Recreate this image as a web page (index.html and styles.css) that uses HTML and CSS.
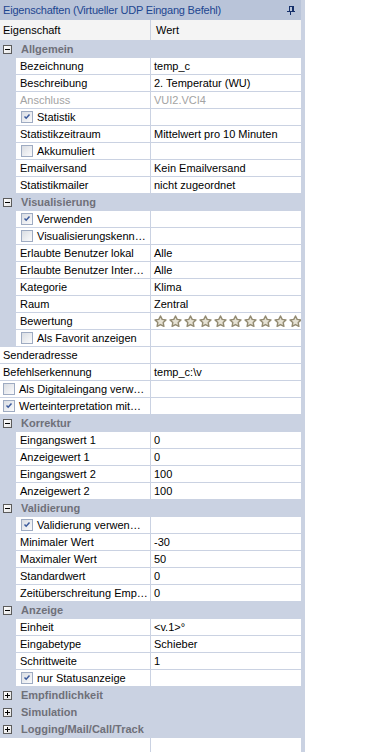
FILE: index.html
```html
<!DOCTYPE html>
<html lang="de">
<head>
    <meta charset="UTF-8">
    <meta name="viewport" content="width=device-width, initial-scale=1.0">
    <title>Eigenschaften</title>
    <link rel="stylesheet" href="styles.css">
</head>
<body>
    <svg width="0" height="0" class="defs">
        <symbol id="star" viewBox="-0.8 -0.8 13.6 13.2">
            <polygon points="6,0 7.76,3.57 11.71,4.15 8.85,6.93 9.53,10.85 6,9 2.47,10.85 3.15,6.93 0.29,4.15 4.24,3.57" fill="#e6e2d4" stroke="#938b72" stroke-width="1.5" stroke-linejoin="round"/>
        </symbol>
        <symbol id="tick" viewBox="0 0 12 12">
            <path d="M3 5.5l2 2 4-4.5" fill="none" stroke="#3b5a9c" stroke-width="1.8"/>
        </symbol>
    </svg>

    <div class="panel">
        <div class="titlebar">
            <span>Eigenschaften (Virtueller UDP Eingang Befehl)</span>
            <svg class="pin" width="8" height="9" viewBox="0 0 8 9"><path d="M2 0h5v1H2zM2 1h1v4H2zM5 1h2v4H5zM0 5h8v1H0zM3 6h1v3H3z" fill="#15306b"/></svg>
        </div>

        <div class="head">
            <div class="name">Eigenschaft</div>
            <div class="val">Wert</div>
        </div>

        <div class="cat"><span class="exp"></span>Allgemein</div>
        <div class="row"><div class="name">Bezeichnung</div><div class="val">temp_c</div></div>
        <div class="row"><div class="name">Beschreibung</div><div class="val">2. Temperatur (WU)</div></div>
        <div class="row off"><div class="name">Anschluss</div><div class="val">VUI2.VCI4</div></div>
        <div class="row"><div class="name box"><span class="chk"><svg><use href="#tick"/></svg></span>Statistik</div><div class="val"></div></div>
        <div class="row"><div class="name">Statistikzeitraum</div><div class="val">Mittelwert pro 10 Minuten</div></div>
        <div class="row"><div class="name box"><span class="chk"></span>Akkumuliert</div><div class="val"></div></div>
        <div class="row"><div class="name">Emailversand</div><div class="val">Kein Emailversand</div></div>
        <div class="row"><div class="name">Statistikmailer</div><div class="val">nicht zugeordnet</div></div>

        <div class="cat"><span class="exp"></span>Visualisierung</div>
        <div class="row"><div class="name box"><span class="chk"><svg><use href="#tick"/></svg></span>Verwenden</div><div class="val"></div></div>
        <div class="row"><div class="name box"><span class="chk"></span>Visualisierungskenn…</div><div class="val"></div></div>
        <div class="row"><div class="name">Erlaubte Benutzer lokal</div><div class="val">Alle</div></div>
        <div class="row"><div class="name">Erlaubte Benutzer Inter…</div><div class="val">Alle</div></div>
        <div class="row"><div class="name">Kategorie</div><div class="val">Klima</div></div>
        <div class="row"><div class="name">Raum</div><div class="val">Zentral</div></div>
        <div class="row">
            <div class="name">Bewertung</div>
            <div class="val stars">
                <svg><use href="#star"/></svg><svg><use href="#star"/></svg><svg><use href="#star"/></svg><svg><use href="#star"/></svg><svg><use href="#star"/></svg>
                <svg><use href="#star"/></svg><svg><use href="#star"/></svg><svg><use href="#star"/></svg><svg><use href="#star"/></svg><svg><use href="#star"/></svg>
            </div>
        </div>
        <div class="row"><div class="name box"><span class="chk"></span>Als Favorit anzeigen</div><div class="val"></div></div>

        <div class="row top"><div class="name">Senderadresse</div><div class="val"></div></div>
        <div class="row top"><div class="name">Befehlserkennung</div><div class="val">temp_c:\v</div></div>
        <div class="row top"><div class="name box"><span class="chk"></span>Als Digitaleingang verw…</div><div class="val"></div></div>
        <div class="row top"><div class="name box"><span class="chk"><svg><use href="#tick"/></svg></span>Werteinterpretation mit…</div><div class="val"></div></div>

        <div class="cat"><span class="exp"></span>Korrektur</div>
        <div class="row"><div class="name">Eingangswert 1</div><div class="val">0</div></div>
        <div class="row"><div class="name">Anzeigewert 1</div><div class="val">0</div></div>
        <div class="row"><div class="name">Eingangswert 2</div><div class="val">100</div></div>
        <div class="row"><div class="name">Anzeigewert 2</div><div class="val">100</div></div>

        <div class="cat"><span class="exp"></span>Validierung</div>
        <div class="row"><div class="name box"><span class="chk"><svg><use href="#tick"/></svg></span>Validierung verwen…</div><div class="val"></div></div>
        <div class="row"><div class="name">Minimaler Wert</div><div class="val">-30</div></div>
        <div class="row"><div class="name">Maximaler Wert</div><div class="val">50</div></div>
        <div class="row"><div class="name">Standardwert</div><div class="val">0</div></div>
        <div class="row"><div class="name">Zeitüberschreitung Emp…</div><div class="val">0</div></div>

        <div class="cat"><span class="exp"></span>Anzeige</div>
        <div class="row"><div class="name">Einheit</div><div class="val">&lt;v.1&gt;°</div></div>
        <div class="row"><div class="name">Eingabetype</div><div class="val">Schieber</div></div>
        <div class="row"><div class="name">Schrittweite</div><div class="val">1</div></div>
        <div class="row"><div class="name box"><span class="chk"><svg><use href="#tick"/></svg></span>nur Statusanzeige</div><div class="val"></div></div>

        <div class="cat"><span class="exp plus"></span>Empfindlichkeit</div>
        <div class="cat"><span class="exp plus"></span>Simulation</div>
        <div class="cat"><span class="exp plus"></span>Logging/Mail/Call/Track</div>

        <div class="blank"><div class="name"></div><div class="val"></div></div>
    </div>
</body>
</html>
```

FILE: styles.css
```css
* { box-sizing: border-box; }
body { margin: 0; background: #fff; font: 11px "Liberation Sans", Arial, sans-serif; color: #000; }
.defs { position: absolute; }

.panel { width: 305px; border-right: 4px solid #cad2e2; }

.titlebar { height: 20px; display: flex; align-items: center; justify-content: space-between; padding: 0 6px 0 3px; background: #b9c4d9; color: #1d4690; letter-spacing: -0.2px; }
.pin { display: block; }

.head { display: flex; height: 21px; line-height: 20px; border-bottom: 1px solid #cad2e2; background: #f4f4f4; }
.head .name { width: 151px; padding-left: 3px; border-right: 1px solid #cad2e2; }
.head .val { flex: 1; padding-left: 5px; }

.row { display: flex; height: 17px; line-height: 17px; padding-left: 16px; border-bottom: 1px solid #cad2e2; background: #cad2e2; }
.row .name { width: 135px; padding-left: 4px; border-right: 1px solid #cad2e2; background: #fff; white-space: nowrap; overflow: hidden; }
.row .val { flex: 1; padding-left: 3px; background: #fff; white-space: nowrap; overflow: hidden; }
.row.top { padding-left: 0; }
.row.top .name { width: 151px; padding-left: 3px; }
.row.off { color: #a3a3a3; }

.name.box { display: flex; align-items: center; padding-left: 5px; }
.row.top .name.box { padding-left: 3px; }
.chk { width: 12px; height: 12px; margin-right: 4px; flex: none; border: 1px solid #9eabc2; background: linear-gradient(135deg, #d9dde3, #fbfbfc); }
.chk svg { display: block; width: 10px; height: 10px; }

.stars { display: flex; align-items: center; gap: 2px; padding-left: 7px; }
.stars svg { width: 13px; height: 13px; flex: none; }

.cat { display: flex; align-items: center; height: 17px; padding-left: 3px; border-bottom: 1px solid #cad2e2; background: #cad2e2; color: #6f7079; font-weight: bold; }
.exp { position: relative; width: 9px; height: 9px; margin-right: 9px; border: 1px solid #5c5c5c; background: linear-gradient(135deg, #fff, #e4e4e4); }
.exp::before { content: ""; position: absolute; left: 1px; top: 3px; width: 5px; height: 1px; background: #000; }
.exp.plus::after { content: ""; position: absolute; left: 3px; top: 1px; width: 1px; height: 5px; background: #000; }

.blank { display: flex; height: 14px; }
.blank .name { width: 151px; border-right: 1px solid #cad2e2; }
```
